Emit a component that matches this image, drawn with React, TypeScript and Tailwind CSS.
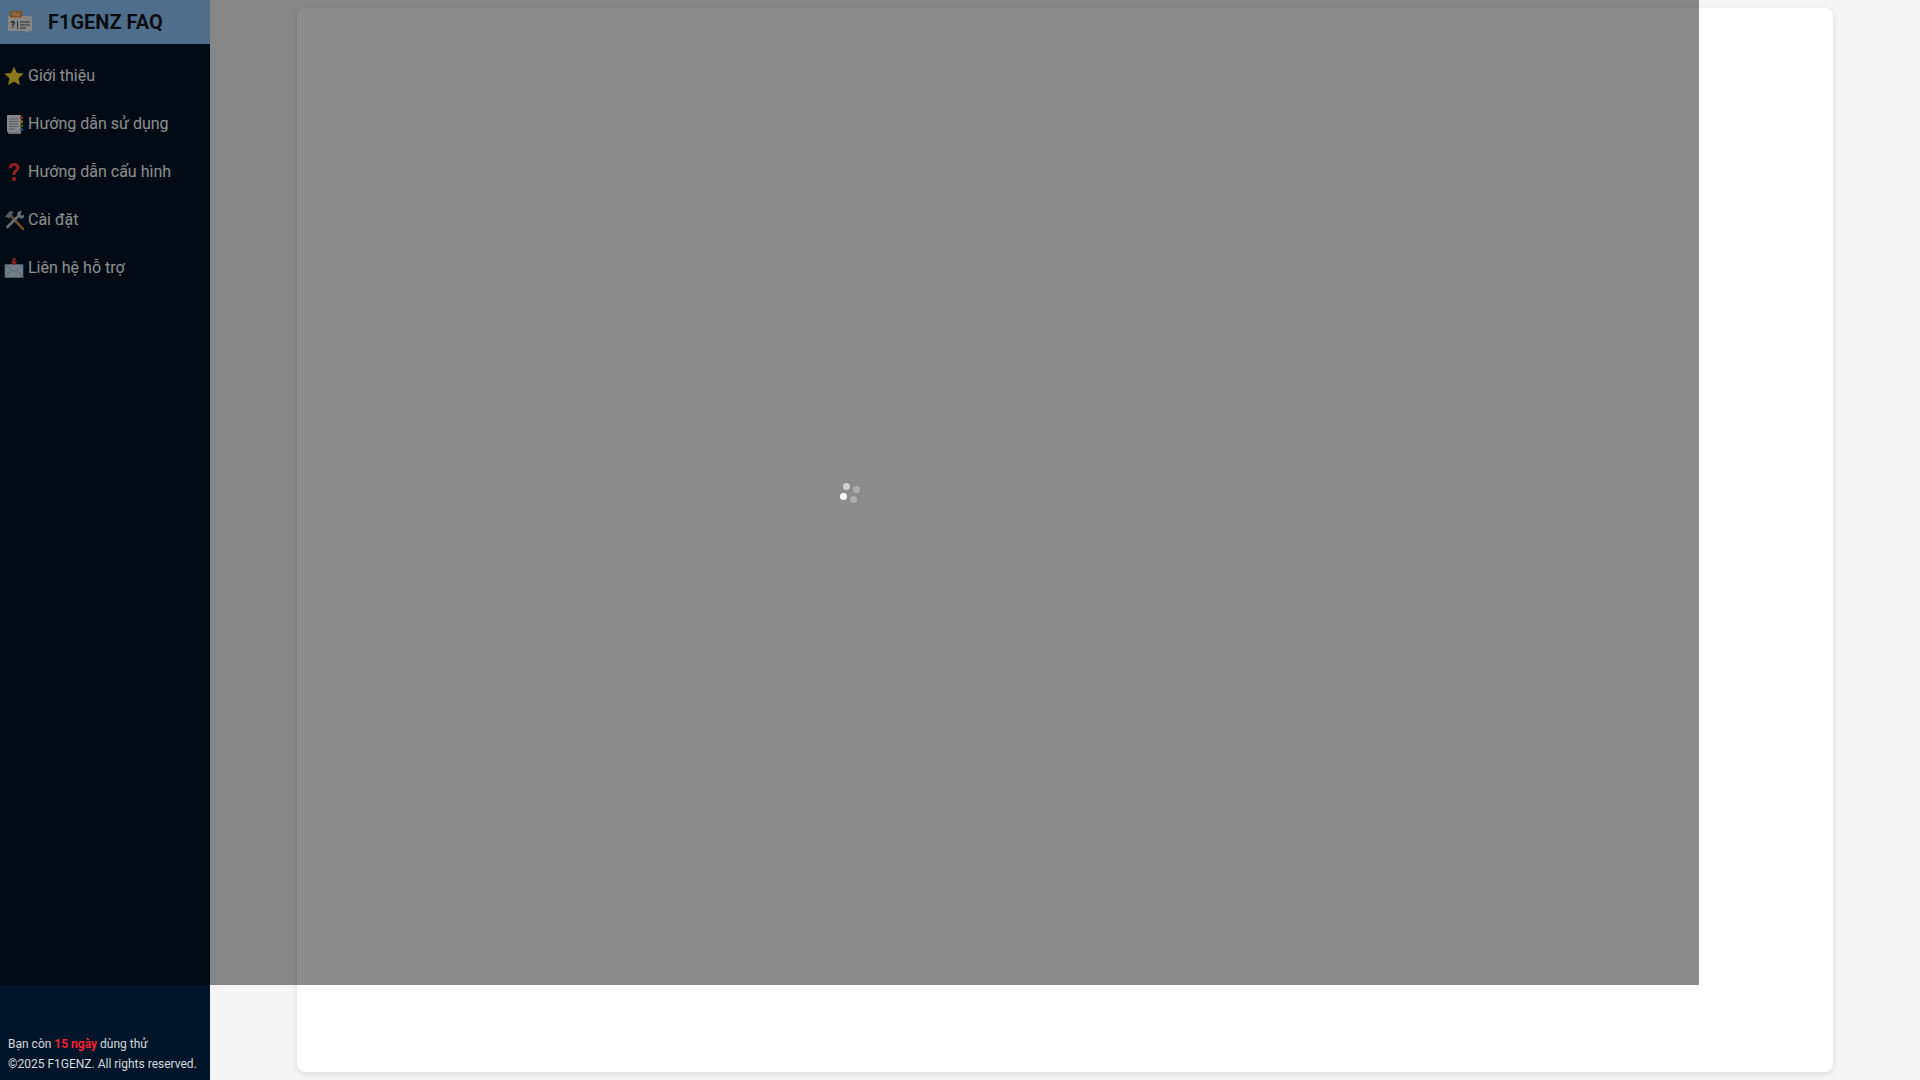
const Star = () => (
  <svg viewBox="0 0 20 20" className="w-5 h-5 shrink-0">
    <path d="M10 1l2.7 6.1 6.6.7-5 4.4 1.5 6.6L10 15.4l-5.8 3.4 1.5-6.6-5-4.4 6.6-.7z" fill="#ffdd33" stroke="#f2ae30" strokeWidth=".5" />
  </svg>
)

const Book = () => (
  <svg viewBox="0 0 20 20" className="w-5 h-5 shrink-0">
    <rect x="4" y="3" width="13" height="17" rx="1" fill="#c6d0d8" />
    <rect x="3" y="1" width="14" height="17" rx="1" fill="#f2f4f6" />
    <path d="M5 5h9M5 7.5h9M5 10h9M5 12.5h9M5 15h6" stroke="#8f969c" strokeWidth=".8" />
    <rect x="16" y="2.5" width="3" height="2.5" fill="#f0553d" />
    <rect x="16" y="6.5" width="3" height="2.5" fill="#ffc233" />
    <rect x="16" y="10.5" width="3" height="2.5" fill="#5cc24a" />
    <rect x="16" y="14.5" width="3" height="2.5" fill="#3f9bef" />
  </svg>
)

const Question = () => (
  <svg viewBox="0 0 20 20" className="w-5 h-5 shrink-0">
    <path d="M4.6 6.4C4.6 3 7 .9 10.2 .9c3.2 0 5.4 1.9 5.4 4.7 0 2.3-1.3 3.4-2.6 4.4-1 .8-1.4 1.4-1.4 2.9H8.4c0-2.5.7-3.5 1.9-4.6 1-.8 1.6-1.5 1.6-2.5 0-1.1-.7-1.7-1.9-1.7-1.3 0-2 .8-2 2z" fill="#ff3a30" />
    <circle cx="10" cy="16.9" r="2.2" fill="#ff3a30" />
  </svg>
)

const Tools = () => (
  <svg viewBox="0 0 20 20" className="w-5 h-5 shrink-0">
    <path d="M5 4l14 15" stroke="#c98445" strokeWidth="2.6" strokeLinecap="round" />
    <path d="M1 6.5L6.3 .8l3.4 1.3L5.2 8.4z" fill="#93a6b2" />
    <path d="M15.8 4.5L3.4 17" stroke="#b9cbd6" strokeWidth="2.6" strokeLinecap="round" />
    <path d="M13.2 3.8a3.6 3.6 0 015-2.6l-2.2 2.2.6 1.8 1.8.6L20.6 3.6a3.6 3.6 0 01-5.4 4.2z" fill="#b9cbd6" />
  </svg>
)

const Inbox = () => (
  <svg viewBox="0 0 20 20" className="w-5 h-5 shrink-0">
    <rect x="1" y="6.5" width="18" height="13" fill="#cfe8fa" stroke="#8ab4d0" strokeWidth=".8" />
    <path d="M1 7l9 6.5L19 7M1 19.5l6.5-8M19 19.5l-6.5-8" fill="none" stroke="#8ab4d0" strokeWidth=".9" />
    <path d="M8.6 0h2.8v3.4h2L10 7.4 6.6 3.4h2z" fill="#ff3d36" />
  </svg>
)

const items = [
  { icon: <Star />, label: 'Giới thiệu' },
  { icon: <Book />, label: 'Hướng dẫn sử dụng' },
  { icon: <Question />, label: 'Hướng dẫn cấu hình' },
  { icon: <Tools />, label: 'Cài đặt' },
  { icon: <Inbox />, label: 'Liên hệ hỗ trợ' },
]

export default function App() {
  return (
    <div className="relative flex h-screen overflow-hidden bg-[#f5f5f5] font-['Roboto',sans-serif]">
      {/* Sidebar */}
      <aside className="flex w-[210px] shrink-0 flex-col bg-[#001529]">
        <div className="flex h-11 items-center bg-[#8fc8ff] pl-2">
          <svg viewBox="0 0 24 22" className="h-[22px] w-6 shrink-0">
            <path d="M0 5h24v15h-3l-2 2-2-2H0z" fill="#f4f4f4" />
            <rect x="2" y="0" width="12" height="6.5" rx="1.2" fill="#f58a2c" />
            <text x="8" y="5" fontSize="4.6" textAnchor="middle" fill="#fff" fontFamily="Roboto">FAQ</text>
            <text x="2.5" y="17" fontSize="9" fontWeight="700" fill="#333" fontFamily="Roboto">?</text>
            <path d="M9.5 10v8M12 11h10M12 14h10M12 17h6" stroke="#555" strokeWidth="1" />
          </svg>
          <span className="ml-4 text-xl font-bold text-[#000000e0]">F1GENZ FAQ</span>
        </div>

        <nav className="flex flex-1 flex-col gap-2 pt-3">
          {items.map(item => (
            <div key={item.label} className="flex h-10 items-center gap-1 pl-1 text-base text-white">
              {item.icon}
              <span>{item.label}</span>
            </div>
          ))}
        </nav>

        <div className="pb-1.5 pl-2 text-xs leading-5 text-[#ffffffd9]">
          <p>Bạn còn <span className="font-bold text-[#f5222d]">15 ngày</span> dùng thử</p>
          <p>©2025 F1GENZ. All rights reserved.</p>
        </div>
      </aside>

      {/* Content */}
      <main className="flex-1 py-2 pl-[87px] pr-[87px]">
        <div className="h-full rounded-lg bg-white shadow-[0_2px_6px_rgba(0,0,0,0.1)]" />
      </main>

      {/* Loading mask */}
      <div className="absolute left-0 top-0 flex h-[985px] w-[1699px] items-center justify-center bg-black/45">
        <div className="relative h-5 w-5">
          <span className="absolute bottom-[3px] left-0 h-[7px] w-[7px] rounded-full bg-white" />
          <span className="absolute left-[3px] top-0 h-[7px] w-[7px] rounded-full bg-white/60" />
          <span className="absolute right-0 top-[3px] h-[7px] w-[7px] rounded-full bg-white/30" />
          <span className="absolute bottom-0 right-[3px] h-[7px] w-[7px] rounded-full bg-white/30" />
        </div>
      </div>
    </div>
  )
}
